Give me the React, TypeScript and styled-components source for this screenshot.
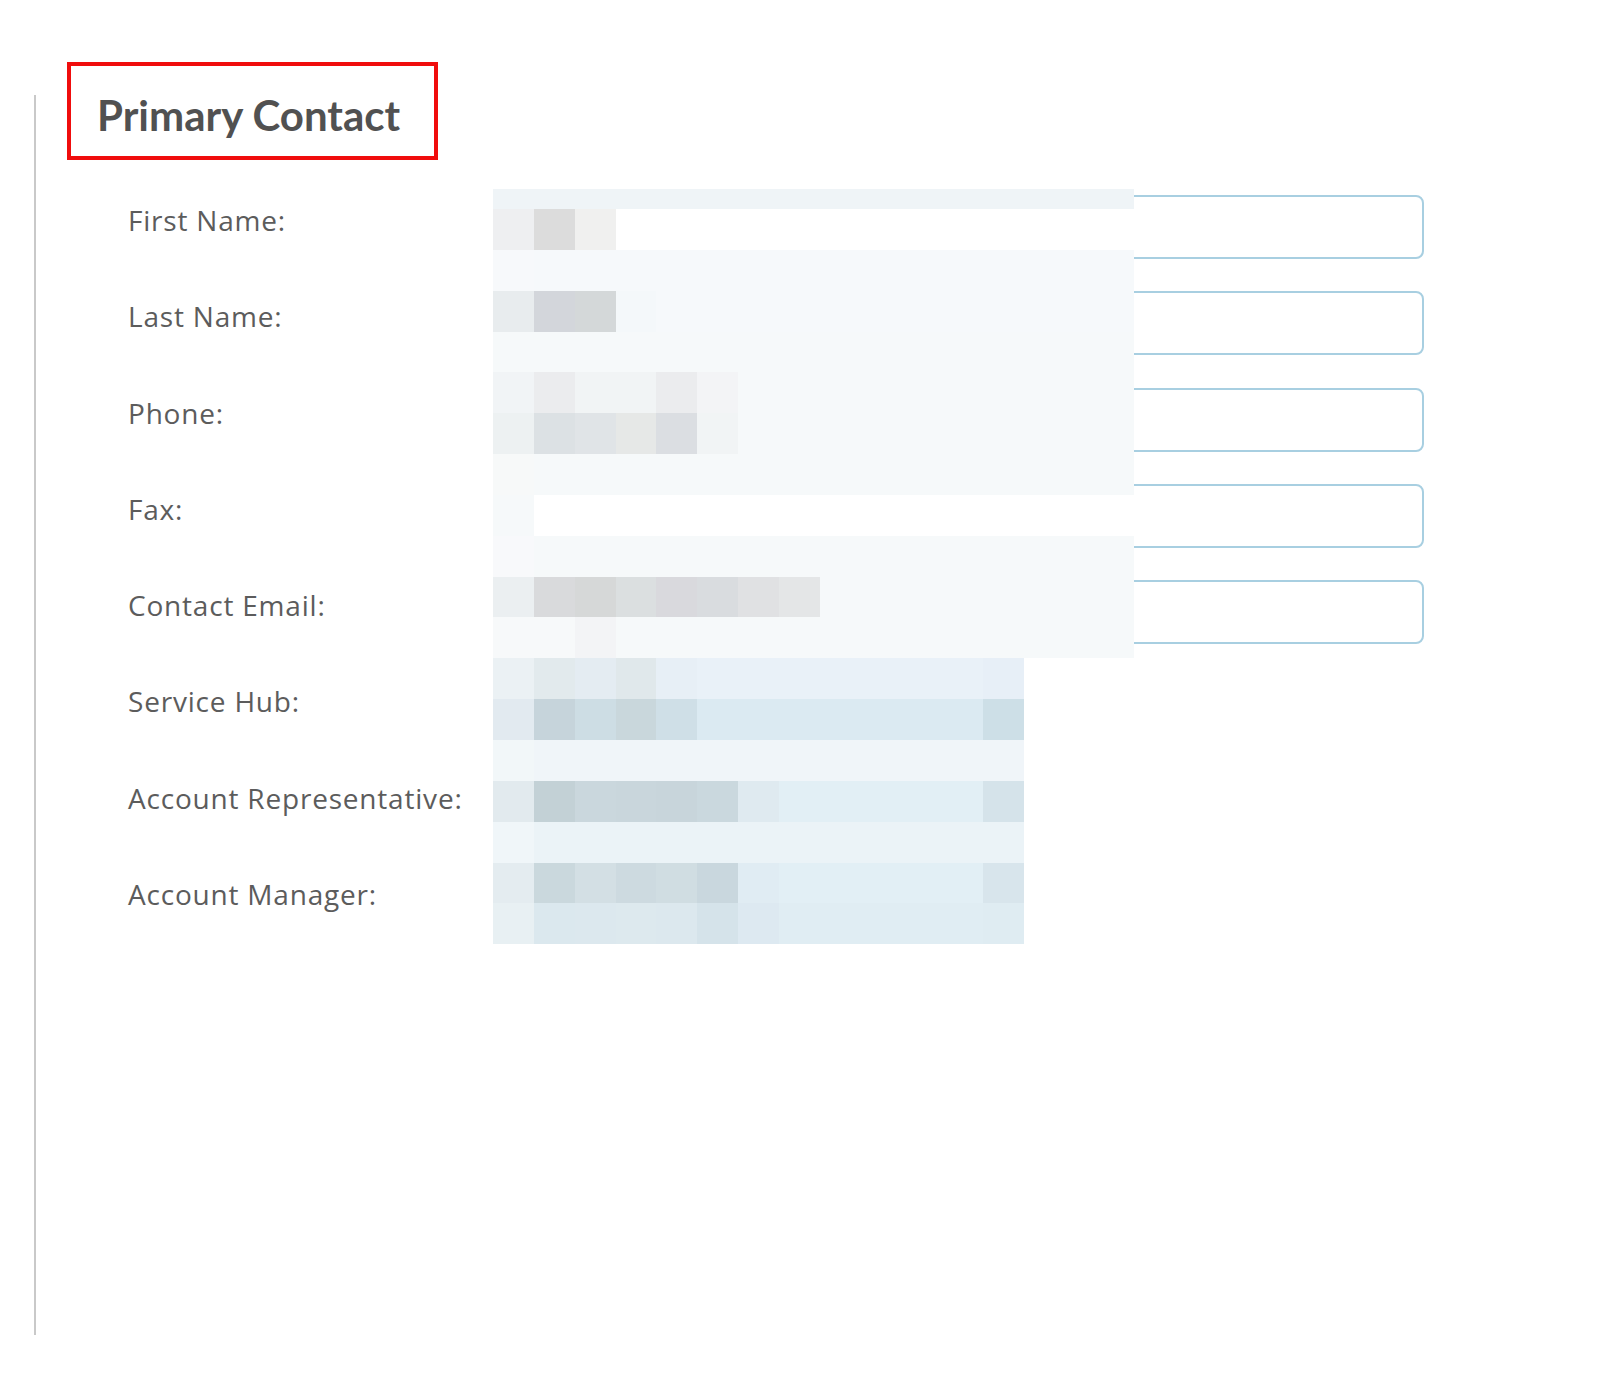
import React from "react";
import styled, { createGlobalStyle } from "styled-components";

const GlobalStyle = createGlobalStyle`
  html,
  body {
    margin: 0;
    padding: 0;
    background: #ffffff;
  }

  body {
    font-family: "Open Sans", "Noto Sans", Arial, sans-serif;
  }
`;

const Page = styled.div`
  padding: 95px 0 59px 34px;
`;

const Panel = styled.section`
  box-sizing: border-box;
  height: 1240px;
  border-left: 2px solid #c9c9c9;
`;

const Heading = styled.h2`
  position: relative;
  width: fit-content;
  margin: 0 0 0 61px;
  font-family: Lato, "Open Sans", sans-serif;
  font-weight: 700;
  font-size: 42px;
  line-height: 40px;
  color: #515151;
`;

// red annotation frame drawn over the heading
const Highlight = styled.span`
  position: absolute;
  left: -30px;
  top: -33px;
  box-sizing: border-box;
  width: 371px;
  height: 98px;
  border: 4px solid #f00d0d;
  pointer-events: none;
`;

const Form = styled.form`
  position: relative;
  display: grid;
  grid-template-columns: 365px 931px;
  grid-auto-rows: 64px;
  row-gap: 32.3px;
  width: max-content;
  margin: 60px 0 0 92px;
`;

const Label = styled.label`
  padding-top: 6px;
  font-size: 28px;
  line-height: 38px;
  letter-spacing: 0.8px;
  color: #5c5c5c;
  white-space: nowrap;
`;

const TextInput = styled.input`
  box-sizing: border-box;
  width: 100%;
  height: 64px;
  margin: 0;
  padding: 0 16px;
  border: 2px solid #a8cfe1;
  border-radius: 8px;
  background: #ffffff;
  font-family: inherit;
  font-size: 24px;
  color: #444;
  outline: none;
`;

const Value = styled.div`
  height: 64px;
  font-size: 24px;
  color: #444;
`;

// pixelated redaction block laid over the field column
const Redaction = styled.svg`
  position: absolute;
  left: 365px;
  top: -6px;
  pointer-events: none;
`;

type Field = { label: string; id: string; kind: "input" | "value" };

const fields: Field[] = [
  { label: "First Name:", id: "firstName", kind: "input" },
  { label: "Last Name:", id: "lastName", kind: "input" },
  { label: "Phone:", id: "phone", kind: "input" },
  { label: "Fax:", id: "fax", kind: "input" },
  { label: "Contact Email:", id: "email", kind: "input" },
  { label: "Service Hub:", id: "hub", kind: "value" },
  { label: "Account Representative:", id: "rep", kind: "value" },
  { label: "Account Manager:", id: "manager", kind: "value" },
];

type MosaicRow = { lead?: string[]; fill: string; tail?: string };

const BLOCK = 40.85;
const TOP_WIDTH = 641;
const BOTTOM_COLS = 13;
const STRIP = 20;

const topRows: MosaicRow[] = [
  { fill: "#eff4f7" },
  { lead: ["#eeeff1", "#dcdcdc", "#f0f0ef"], fill: "#ffffff" },
  { lead: ["#f7f9fb"], fill: "#f6f9fb" },
  { lead: ["#e8ecee", "#d3d6db", "#d4d8d9", "#f4f8fa"], fill: "#f6f9fb" },
  { fill: "#f6f9fa" },
  { lead: ["#f1f4f6", "#ebecee", "#f1f4f5", "#f1f4f5", "#ebecee", "#f3f4f6"], fill: "#f6f9fa" },
  { lead: ["#edf1f2", "#dce1e4", "#e0e4e7", "#e6e8e7", "#dbdee2", "#f1f4f5"], fill: "#f6f9fa" },
  { lead: ["#f7f9f9"], fill: "#f6f9fa" },
  { lead: ["#f6f9fa"], fill: "#ffffff" },
  { lead: ["#f8f9fb"], fill: "#f6f9fa" },
  {
    lead: ["#ebeff1", "#d9dadc", "#d6d8d8", "#dbdfe0", "#d9d9dd", "#d9dcdf", "#e0e1e3", "#e4e6e7"],
    fill: "#f6f9fa",
  },
  { lead: ["#f7f9fa", "#f7f9fa", "#f3f4f6"], fill: "#f6f9fa" },
];

const bottomRows: MosaicRow[] = [
  { lead: ["#ebf1f4", "#e2eaed", "#e4ecf2", "#e0e8eb", "#e7eff6"], fill: "#e9f1f8", tail: "#e7eff7" },
  { lead: ["#e2eaf0", "#c6d4db", "#cddde4", "#c9d7dc", "#cfdfe7"], fill: "#dbeaf2", tail: "#cddfe7" },
  { lead: ["#f2f7f9"], fill: "#f0f5f9" },
  {
    lead: ["#e2eaee", "#c3d1d6", "#cad7dd", "#c9d6dc", "#c8d5db", "#cad8de", "#dfeaf0"],
    fill: "#e2eff5",
    tail: "#d5e3ea",
  },
  { lead: ["#f0f6f9"], fill: "#ebf3f7" },
  {
    lead: ["#e4ecf0", "#cad8dd", "#d3dfe4", "#cddae0", "#d0dde2", "#c9d7de", "#e0ecf3"],
    fill: "#e2eff5",
    tail: "#d8e5ec",
  },
  {
    lead: ["#e8f0f3", "#dbe8ee", "#dce8ee", "#dde9ee", "#dce8ee", "#d5e3ea", "#dde9f1"],
    fill: "#e0edf3",
    tail: "#dfecf2",
  },
];

const renderRow = (row: MosaicRow, y: number, h: number, width: number, cols: number, key: string) => (
  <g key={key}>
    <rect x={0} y={y} width={width} height={h} fill={row.fill} />
    {(row.lead || []).map((c, i) => (
      <rect key={i} x={i * BLOCK} y={y} width={BLOCK} height={h} fill={c} />
    ))}
    {row.tail && <rect x={(cols - 1) * BLOCK} y={y} width={BLOCK} height={h} fill={row.tail} />}
  </g>
);

const Mosaic: React.FC = () => {
  const topHeight = STRIP + (topRows.length - 1) * BLOCK;
  const height = topHeight + bottomRows.length * BLOCK;
  return (
    <Redaction width={TOP_WIDTH} height={height} viewBox={`0 0 ${TOP_WIDTH} ${height}`} shapeRendering="crispEdges">
      {topRows.map((row, i) => {
        const y = i === 0 ? 0 : STRIP + (i - 1) * BLOCK;
        const h = i === 0 ? STRIP : BLOCK;
        return renderRow(row, y, h, TOP_WIDTH, 16, `t${i}`);
      })}
      {bottomRows.map((row, i) =>
        renderRow(row, topHeight + i * BLOCK, BLOCK, BOTTOM_COLS * BLOCK, BOTTOM_COLS, `b${i}`)
      )}
    </Redaction>
  );
};

const App: React.FC = () => {
  return (
    <>
      <GlobalStyle />
      <Page>
        <Panel>
          <Heading>
            Primary Contact
            <Highlight />
          </Heading>
          <Form onSubmit={(e) => e.preventDefault()}>
            {fields.map((field) => (
              <React.Fragment key={field.id}>
                <Label htmlFor={field.id}>{field.label}</Label>
                {field.kind === "input" ? (
                  <TextInput id={field.id} type="text" />
                ) : (
                  <Value id={field.id} />
                )}
              </React.Fragment>
            ))}
            <Mosaic />
          </Form>
        </Panel>
      </Page>
    </>
  );
};

export default App;
